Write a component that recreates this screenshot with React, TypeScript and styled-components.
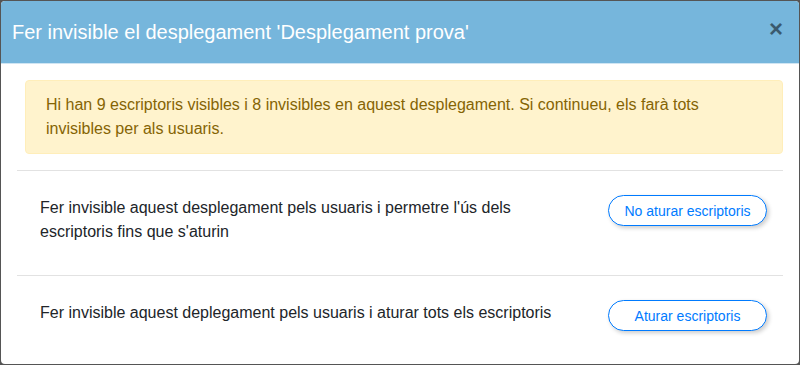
import { createGlobalStyle } from "styled-components";
import styled from "styled-components";

const GlobalStyle = createGlobalStyle`
  html, body {
    margin: 0;
    padding: 0;
    background: #555555;
  }
  body {
    font-family: "Liberation Sans", Arial, sans-serif;
  }
`;

type Option = {
  text: string;
  action: string;
};

const options: Option[] = [
  {
    text: "Fer invisible aquest desplegament pels usuaris i permetre l'ús dels escriptoris fins que s'aturin",
    action: "No aturar escriptoris",
  },
  {
    text: "Fer invisible aquest deplegament pels usuaris i aturar tots els escriptoris",
    action: "Aturar escriptoris",
  },
];

const App: React.FC = () => {
  return (
    <>
      <GlobalStyle />
      <Backdrop>
        <Modal>
          <Header>
            <Title>Fer invisible el desplegament 'Desplegament prova'</Title>
            <CloseButton aria-label='Close'>×</CloseButton>
          </Header>
          <Body>
            <Alert>
              Hi han 9 escriptoris visibles i 8 invisibles en aquest
              desplegament. Si continueu, els farà tots invisibles per als
              usuaris.
            </Alert>
            {options.map((item) => (
              <OptionRow key={item.action}>
                <OptionText>{item.text}</OptionText>
                <PillButton>{item.action}</PillButton>
              </OptionRow>
            ))}
          </Body>
        </Modal>
      </Backdrop>
    </>
  );
};

const Backdrop = styled.div`
  width: 800px;
  height: 365px;
  padding: 1px;
  box-sizing: border-box;
`;

const Modal = styled.div`
  background: white;
  border-radius: 4px;
  overflow: hidden;
  height: 363px;
  display: flex;
  flex-direction: column;
`;

const Header = styled.div`
  background-color: #76b6dc;
  border-bottom: 1px solid #cfe5f3;
  height: 62px;
  flex: none;
  padding: 0 16px 0 11px;
  display: flex;
  align-items: center;
  justify-content: space-between;
`;

const Title = styled.h4`
  margin: 0;
  color: white;
  font-size: 20px;
  font-weight: 400;
  line-height: 24px;
`;

const CloseButton = styled.button`
  background: none;
  border: 0;
  padding: 0;
  margin-top: -6px;
  font-family: "Liberation Sans", Arial, sans-serif;
  font-size: 24px;
  font-weight: 700;
  line-height: 1;
  color: #000;
  opacity: 0.5;
`;

const Body = styled.div`
  padding: 16px 16px 0;
`;

const Alert = styled.div`
  margin-left: 8px;
  padding: 12px 20px;
  background-color: #fff3cd;
  border: 1px solid #ffeeba;
  border-radius: 4px;
  color: #856404;
  font-size: 16px;
  line-height: 24px;
  margin-bottom: 16px;
`;

const OptionRow = styled.div`
  border-top: 1px solid #e2e2e2;
  padding: 24px 16px 31px 23px;
  display: flex;
  align-items: flex-start;
  justify-content: space-between;
  gap: 20px;
`;

const OptionText = styled.div`
  max-width: 545px;
  color: #212529;
  font-size: 16px;
  line-height: 24px;
  padding-top: 1px;
`;

const PillButton = styled.button`
  flex: none;
  width: 159px;
  height: 31px;
  border: 1px solid #007bff;
  border-radius: 16px;
  background: white;
  color: #007bff;
  font-family: "Liberation Sans", Arial, sans-serif;
  font-size: 14px;
  line-height: 20px;
  box-shadow: 2px 2px 4px rgba(0, 0, 0, 0.2);
  cursor: pointer;
`;

export default App;
